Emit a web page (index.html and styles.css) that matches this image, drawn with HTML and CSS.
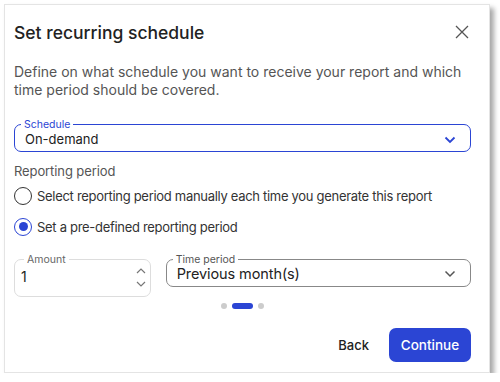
FILE: index.html
```html
<!DOCTYPE html>
<html lang="en">
<head>
    <meta charset="UTF-8">
    <title>Set recurring schedule</title>
    <link rel="stylesheet" href="styles.css">
</head>
<body>
    <div class="dialog">
        <!-- En-tête -->
        <div class="header">
            <h2>Set recurring schedule</h2>
            <button class="close" aria-label="Close">
                <svg width="14" height="14" viewBox="0 0 14 14"><path d="M1 1L13 13M13 1L1 13" stroke="#555" stroke-width="1.3" fill="none"/></svg>
            </button>
        </div>

        <p class="desc">Define on what schedule you want to receive your report and which time period should be covered.</p>

        <!-- Planification -->
        <fieldset class="field select">
            <legend>Schedule</legend>
            <span class="value">On-demand</span>
            <svg class="chevron" width="12" height="8" viewBox="0 0 12 8"><path d="M1.5 1.5L6 6L10.5 1.5" stroke="#2b45d4" stroke-width="1.8" fill="none"/></svg>
        </fieldset>

        <div class="section-label">Reporting period</div>
        <label class="radio first">
            <span class="circle"></span>
            Select reporting period manually each time you generate this report
        </label>
        <label class="radio">
            <span class="circle checked"></span>
            Set a pre-defined reporting period
        </label>

        <div class="row">
            <fieldset class="field amount">
                <legend>Amount</legend>
                <span class="value">1</span>
                <span class="spin">
                    <svg width="10" height="6" viewBox="0 0 10 6"><path d="M1 5L5 1L9 5" stroke="#777" stroke-width="1.2" fill="none"/></svg>
                    <svg width="10" height="6" viewBox="0 0 10 6"><path d="M1 1L5 5L9 1" stroke="#777" stroke-width="1.2" fill="none"/></svg>
                </span>
            </fieldset>
            <fieldset class="field period">
                <legend>Time period</legend>
                <span class="value">Previous month(s)</span>
                <svg class="chevron" width="12" height="8" viewBox="0 0 12 8"><path d="M1.5 1.5L6 6L10.5 1.5" stroke="#555" stroke-width="1.5" fill="none"/></svg>
            </fieldset>
        </div>

        <div class="dots">
            <span class="dot"></span>
            <span class="dot current"></span>
            <span class="dot"></span>
        </div>

        <div class="footer">
            <button class="back">Back</button>
            <button class="continue">Continue</button>
        </div>
    </div>
</body>
</html>
```

FILE: styles.css
```css
* {
    margin: 0;
    padding: 0;
    box-sizing: border-box;
}

body {
    font-family: Inter, "Noto Sans", sans-serif;
    background-color: #fff;
    color: #222;
    padding: 4px 0 0 4px;
}

.dialog {
    width: 486px;
    height: 369px;
    background-color: white;
    border: 1px solid #e4e4e4;
    box-shadow: 4px 4px 5px rgba(0, 0, 0, 0.35);
    padding: 0 18px 0 9px;
}

.header {
    display: flex;
    justify-content: space-between;
    align-items: center;
    padding-top: 11px;
    height: 44px;
}

h2 {
    font-size: 17.5px;
    font-weight: 500;
    color: #222;
}

.close {
    background: none;
    border: none;
    margin-right: 2px;
    margin-top: 2px;
}

.desc {
    margin-top: 14px;
    font-size: 14px;
    line-height: 18px;
    color: #555;
    width: 460px;
}

.field {
    border: 1px solid #bbb;
    border-radius: 7px;
    padding: 1px 10px 3px;
    display: flex;
    align-items: center;
}

.field legend {
    font-size: 10.5px;
    color: #666;
    padding: 0 3px;
    margin-left: -4px;
    line-height: 11px;
}

.field .value {
    flex: 1;
    font-size: 13px;
    line-height: 17px;
}

.select {
    margin-top: 20px;
    border-color: #2b45d4;
}

.select legend {
    color: #2b45d4;
}

.chevron {
    margin-right: 4px;
}

.section-label {
    margin-top: 11px;
    font-size: 13px;
    line-height: 17px;
    letter-spacing: -0.1px;
    color: #555;
}

.radio {
    display: flex;
    align-items: center;
    gap: 5px;
    font-size: 13px;
    letter-spacing: -0.3px;
    white-space: nowrap;
    color: #333;
    margin-top: 8px;
    height: 23px;
}

.radio.first {
    margin-top: 4px;
}

.circle {
    width: 18px;
    height: 18px;
    border: 1.5px solid #333;
    border-radius: 50%;
    display: flex;
    justify-content: center;
    align-items: center;
}

.circle.checked {
    border-color: #2b45d4;
}

.circle.checked::after {
    content: "";
    width: 9px;
    height: 9px;
    border-radius: 50%;
    background-color: #2b45d4;
}

.row {
    display: flex;
    align-items: flex-start;
    gap: 15px;
    margin-top: 16px;
}

.amount {
    width: 137px;
    border-color: #ddd;
    padding: 1px 4px 9px 6px;
}

.amount legend {
    margin-left: 3px;
}

.amount .value {
    font-size: 14px;
}

.spin {
    display: flex;
    flex-direction: column;
    gap: 7px;
    margin-top: 2px;
}

.period {
    width: 306px;
    border-color: #888;
    padding: 0 10px 4px;
}

.period legend {
    color: #555;
}

.period .value {
    font-size: 14.5px;
    letter-spacing: -0.1px;
}

.dots {
    display: flex;
    justify-content: center;
    align-items: center;
    gap: 5px;
    margin-top: 6px;
}

.dot {
    width: 6px;
    height: 6px;
    border-radius: 50%;
    background-color: #ccc;
}

.dot.current {
    width: 21px;
    border-radius: 3px;
    background-color: #2b45d4;
}

.footer {
    display: flex;
    justify-content: flex-end;
    align-items: center;
    gap: 20px;
    margin-top: 19px;
}

button {
    font-family: Inter, "Noto Sans", sans-serif;
    cursor: pointer;
}

.back {
    background: none;
    border: none;
    font-size: 13px;
    font-weight: 500;
    color: #222;
}

.continue {
    width: 82px;
    height: 34px;
    background-color: #2b45d4;
    color: white;
    border: none;
    border-radius: 7px;
    font-size: 13.5px;
    font-weight: 500;
}
```
